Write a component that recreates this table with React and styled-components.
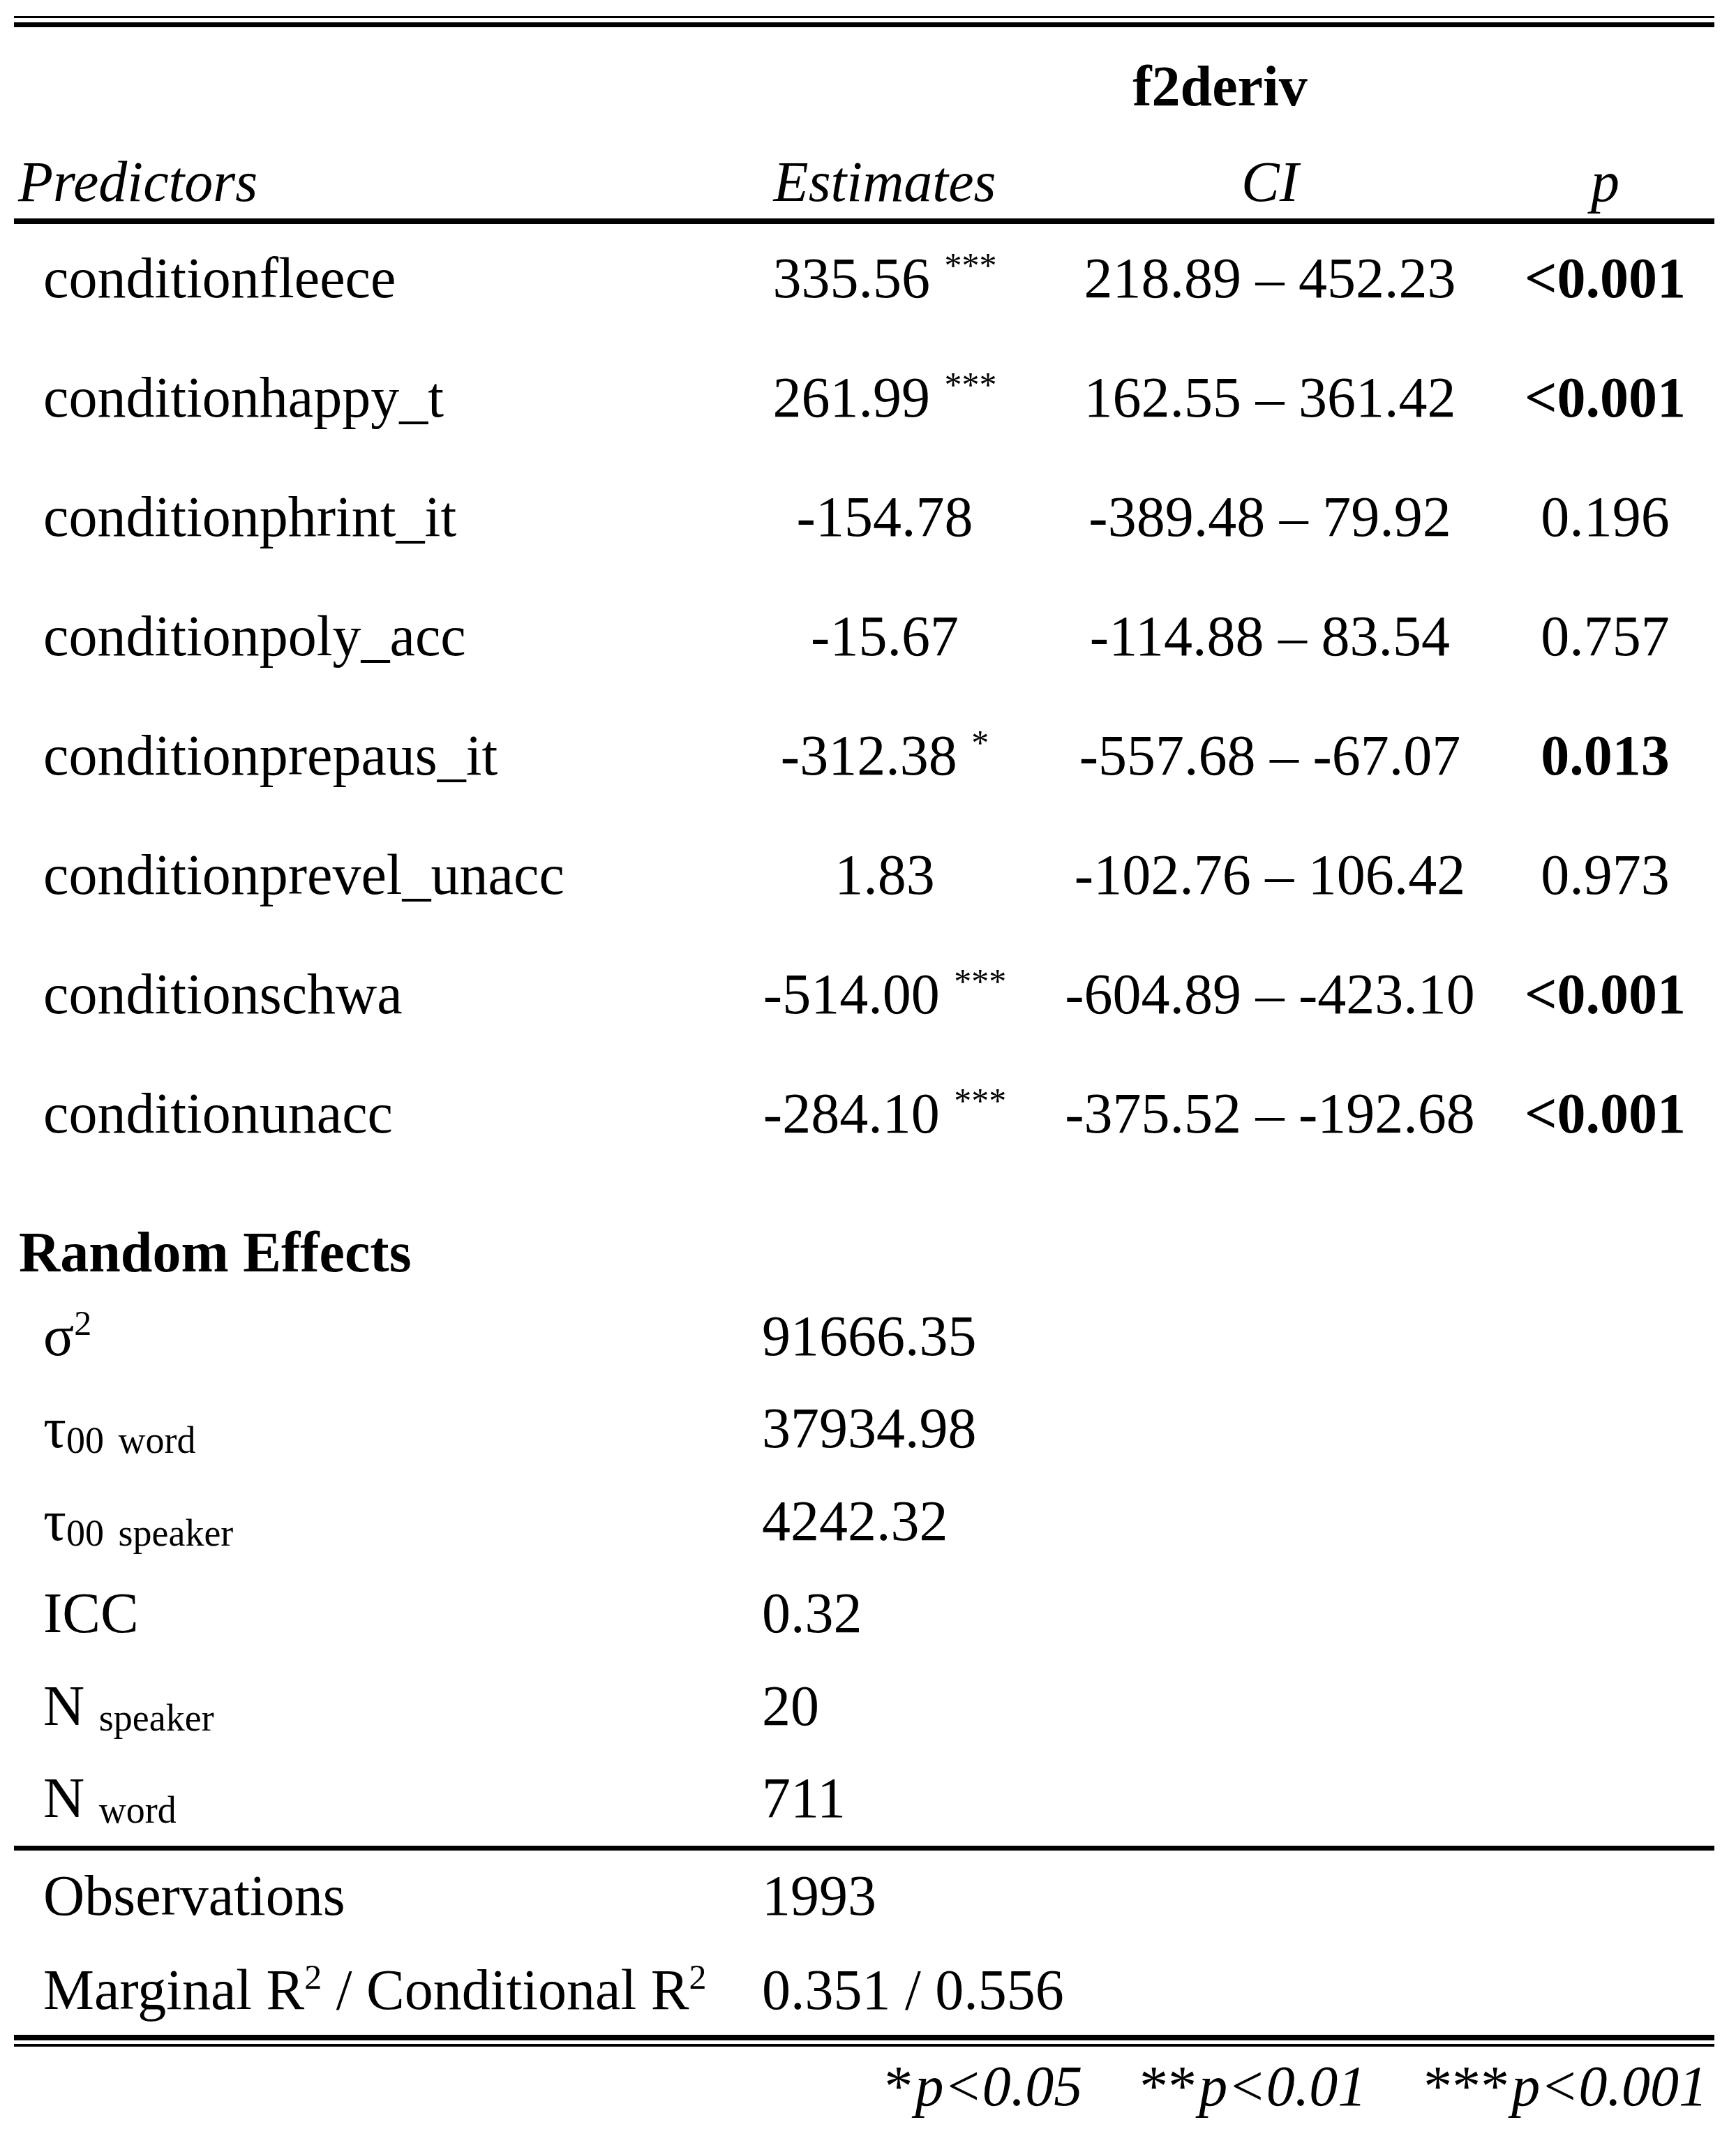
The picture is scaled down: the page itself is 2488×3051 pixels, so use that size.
import React from "react";
import styled, { createGlobalStyle } from "styled-components";

const GlobalStyle = createGlobalStyle`
  html, body {
    margin: 0;
    padding: 0;
    background: #fff;
  }
`;

const Sheet = styled.div`
  width: 2437px;
  margin-left: 20px;
  padding-top: 23px;
  font-family: "Liberation Serif", "Times New Roman", serif;
  font-size: 82px;
  line-height: 1;
  color: #000;
`;

const DoubleRule = styled.div`
  height: ${({ $gap }) => $gap}px;
  border-top: ${({ $top }) => $top}px solid #000;
  border-bottom: ${({ $bottom }) => $bottom}px solid #000;
`;

const Rule = styled.div`
  margin-top: ${({ $mt }) => $mt}px;
  border-top: ${({ $w }) => $w}px solid #000;
`;

const Row = styled.div`
  display: grid;
  grid-template-columns: 1020px 456px 648px 313px;
  box-sizing: border-box;
  height: ${({ $h }) => $h}px;
  padding-top: ${({ $pt }) => $pt}px;
  border-bottom: ${({ $rule }) => ($rule ? `${$rule}px solid #000` : "none")};
  white-space: nowrap;
`;

const ModelTitle = styled.div`
  grid-column: 2 / 5;
  text-align: center;
  font-weight: bold;
`;

const HeadLabel = styled.div`
  padding-left: 6px;
  font-style: italic;
`;

const HeadCell = styled.div`
  text-align: center;
  font-style: italic;
`;

const Label = styled.div`
  padding-left: 42px;
`;

const SectionLabel = styled.div`
  padding-left: 7px;
  font-weight: bold;
`;

const Num = styled.div`
  text-align: center;
  font-weight: ${({ $bold }) => ($bold ? "bold" : "normal")};
`;

const Value = styled.div`
  grid-column: 2 / 5;
  padding-left: 52px;
`;

const Sup = styled.span`
  font-size: 50px;
  line-height: 0;
  vertical-align: 29px;
`;

const Sub = styled.span`
  font-size: 54px;
  line-height: 0;
  vertical-align: -8px;
`;

const Footnote = styled.div`
  box-sizing: border-box;
  padding-top: 16px;
  padding-right: 10px;
  height: 118px;
  text-align: right;
  font-style: italic;
  white-space: nowrap;
`;

const Note = styled.span`
  & + & {
    margin-left: 78px;
  }
`;

const Stars = styled.span`
  padding-right: 7px;
`;

const predictors = [
  { name: "conditionfleece", est: "335.56", stars: "***", ci: "218.89 – 452.23", p: "<0.001", sig: true },
  { name: "conditionhappy_t", est: "261.99", stars: "***", ci: "162.55 – 361.42", p: "<0.001", sig: true },
  { name: "conditionphrint_it", est: "-154.78", stars: "", ci: "-389.48 – 79.92", p: "0.196", sig: false },
  { name: "conditionpoly_acc", est: "-15.67", stars: "", ci: "-114.88 – 83.54", p: "0.757", sig: false },
  { name: "conditionprepaus_it", est: "-312.38", stars: "*", ci: "-557.68 – -67.07", p: "0.013", sig: true },
  { name: "conditionprevel_unacc", est: "1.83", stars: "", ci: "-102.76 – 106.42", p: "0.973", sig: false },
  { name: "conditionschwa", est: "-514.00", stars: "***", ci: "-604.89 – -423.10", p: "<0.001", sig: true },
  { name: "conditionunacc", est: "-284.10", stars: "***", ci: "-375.52 – -192.68", p: "<0.001", sig: true },
];

const randomEffects = [
  { label: <>σ<Sup>2</Sup></>, value: "91666.35" },
  { label: <>τ<Sub>00</Sub> <Sub>word</Sub></>, value: "37934.98" },
  { label: <>τ<Sub>00</Sub> <Sub>speaker</Sub></>, value: "4242.32" },
  { label: "ICC", value: "0.32" },
  { label: <>N <Sub>speaker</Sub></>, value: "20" },
  { label: <>N <Sub>word</Sub></>, value: "711" },
];

const notes = [
  { stars: "*", text: "p<0.05" },
  { stars: "**", text: "p<0.01" },
  { stars: "***", text: "p<0.001" },
];

export default function App() {
  return (
    <>
      <GlobalStyle />
      <Sheet>
        <DoubleRule $top={3} $gap={6} $bottom={7} />

        <Row $h={127} $pt={44}>
          <div />
          <ModelTitle>f2deriv</ModelTitle>
        </Row>
        <Row $h={155} $pt={54} $rule={8}>
          <HeadLabel>Predictors</HeadLabel>
          <HeadCell>Estimates</HeadCell>
          <HeadCell>CI</HeadCell>
          <HeadCell>p</HeadCell>
        </Row>

        {predictors.map((r) => (
          <Row key={r.name} $h={171} $pt={37}>
            <Label>{r.name}</Label>
            <Num>
              {r.est}
              {r.stars && <> <Sup>{r.stars}</Sup></>}
            </Num>
            <Num>{r.ci}</Num>
            <Num $bold={r.sig}>{r.p}</Num>
          </Row>
        ))}

        <Row $h={147.5} $pt={65}>
          <SectionLabel>Random Effects</SectionLabel>
        </Row>
        {randomEffects.map((r) => (
          <Row key={r.value} $h={132.5} $pt={37}>
            <Label>{r.label}</Label>
            <Value>{r.value}</Value>
          </Row>
        ))}

        <Rule $mt={13.5} $w={7} />
        <Row $h={135} $pt={23.5}>
          <Label>Observations</Label>
          <Value>1993</Value>
        </Row>
        <Row $h={129} $pt={23.5}>
          <Label>
            Marginal R<Sup>2</Sup> / Conditional R<Sup>2</Sup>
          </Label>
          <Value>0.351 / 0.556</Value>
        </Row>

        <DoubleRule $top={8} $gap={5} $bottom={4} />
        <Footnote>
          {notes.map((n) => (
            <Note key={n.stars}>
              <Stars>{n.stars}</Stars>
              {n.text}
            </Note>
          ))}
        </Footnote>
      </Sheet>
    </>
  );
}
